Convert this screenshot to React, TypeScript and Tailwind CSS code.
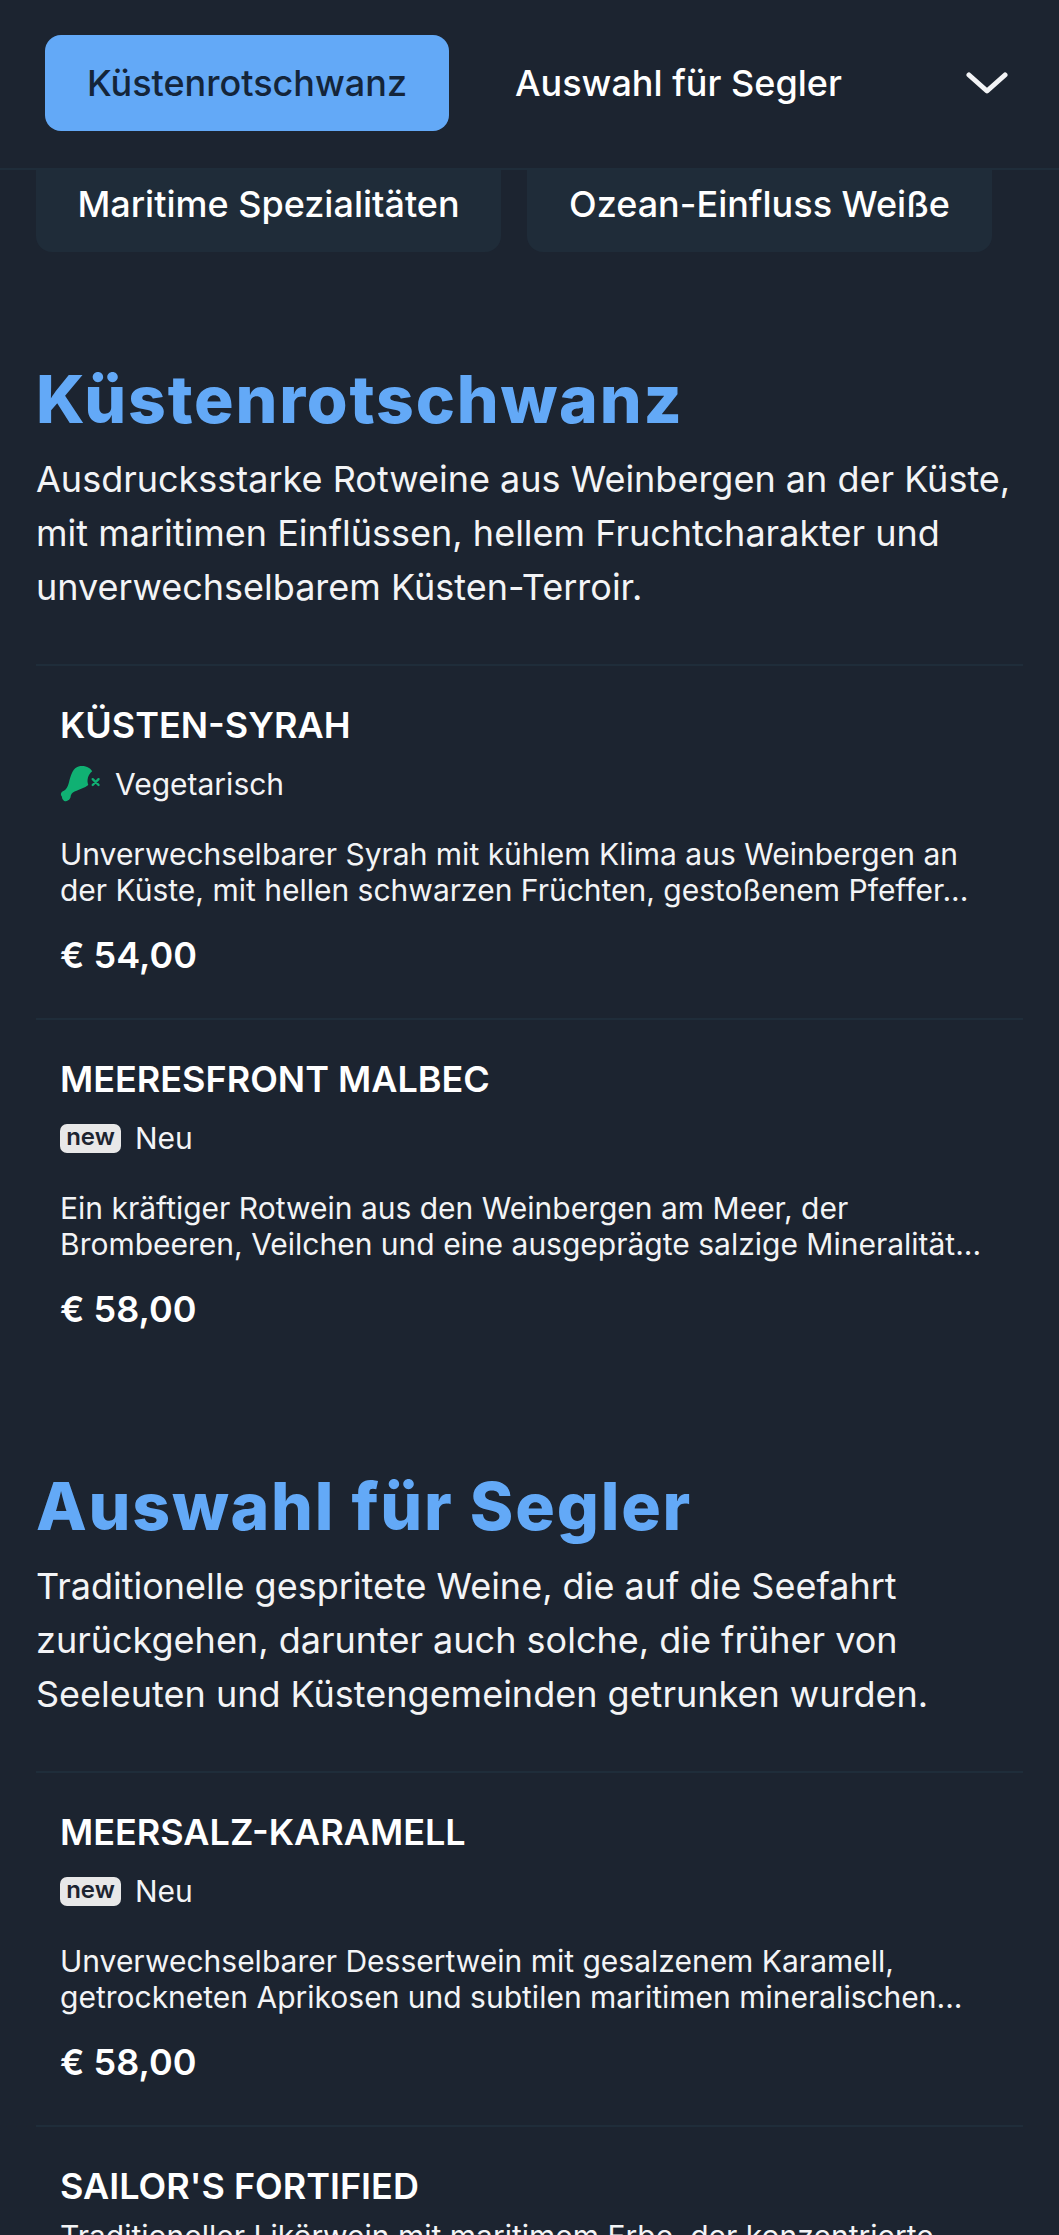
import React from "react";

const INTER = "[font-family:Inter,'Liberation_Sans',sans-serif]";

interface Item {
  name: string;
  tag?: "veg" | "new";
  lines: string[];
  price?: string;
}

function DrumstickIcon() {
  return (
    <svg viewBox="0 0 42 38" className="w-[41px] h-[38px] shrink-0">
      <path
        d="M33 6C30 1 24 0 19 1C14 2 11 9 9 18C8 22 6 25 4 26C1 27 0 30 2 32C2 35 5 38 8 36C10 35 11 33 11 31C12 28 14 27 17 26C21 24 25 23 29 20C27 15 29 9 33 6Z"
        fill="#10b173"
      />
      <path d="M33.500 14l6 6M39.500 14l-6 6" stroke="#10b173" strokeWidth="2.400" strokeLinecap="round" />
    </svg>
  );
}

function NewBadge() {
  return (
    <span className="w-[61px] h-[29px] rounded-[7px] bg-[#e8e8e8] text-[#1c2430] text-[24px] leading-none font-semibold flex items-center justify-center shrink-0 pb-[3px]">
      new
    </span>
  );
}

function MenuItem({ item }: { item: Item }) {
  return (
    <div className="px-[24px] pt-[34px] h-[354px] border-t-2 border-[#1f2d3a]">
      <h3 className="text-[36px] leading-[50px] font-semibold text-white">{item.name}</h3>
      {item.tag && (
        <div className="flex items-center gap-[14px] mt-[9px] h-[50px] text-[30px] text-[#f3f4f6]">
          {item.tag === "veg" ? <DrumstickIcon /> : <NewBadge />}
          <span>{item.tag === "veg" ? "Vegetarisch" : "Neu"}</span>
        </div>
      )}
      <div className={`${item.tag ? "mt-[27px]" : "mt-[7px]"} text-[30px] leading-[36px] text-[#f3f4f6]`}>
        {item.lines.map((l) => (
          <p key={l} className="whitespace-nowrap">
            {l}
          </p>
        ))}
      </div>
      {item.price && <p className="mt-[22px] text-[36px] leading-[50px] font-semibold text-white">{item.price}</p>}
    </div>
  );
}

function Section({ title, intro, items }: { title: string; intro: string[]; items: Item[] }) {
  return (
    <section className="px-[36px]">
      <h2 className="pt-[3px] text-[66px] leading-[80px] font-extrabold tracking-[1.800px] text-[#63a9f7]">{title}</h2>
      <div className="mt-[13px] text-[36px] leading-[54px] text-[#f3f4f6]">
        {intro.map((l) => (
          <p key={l} className="whitespace-nowrap">
            {l}
          </p>
        ))}
      </div>
      <div className="mt-[50px]">
        {items.map((it) => (
          <MenuItem key={it.name} item={it} />
        ))}
      </div>
    </section>
  );
}

export default function App() {
  return (
    <div className={`h-[2235px] overflow-hidden bg-[#1c2430] ${INTER}`}>
      <header className="h-[170px] flex items-center pl-[45px] pr-[51px] border-b-2 border-[#1f2d3a] pb-[2px]">
        <button className="w-[404px] h-[96px] rounded-[16px] bg-[#63a9f7] text-[36px] font-medium text-[#14253a]">
          Küstenrotschwanz
        </button>
        <button className="ml-[66px] text-[36px] font-medium text-white">Auswahl für Segler</button>
        <svg viewBox="0 0 42 22" className="ml-auto w-[42px] h-[22px]" fill="none">
          <path d="M3 3l18 16L39 3" stroke="#f3f4f6" strokeWidth="5" strokeLinecap="round" strokeLinejoin="round" />
        </svg>
      </header>

      {/* tabs, scrolled mostly under the bar */}
      <div className="h-[82px] overflow-hidden flex gap-[26px] pl-[36px]">
        {["Maritime Spezialitäten", "Ozean-Einfluss Weiße"].map((t) => (
          <div
            key={t}
            className="w-[465px] h-[82px] rounded-b-[16px] bg-[#1f2c39] text-[36px] font-medium text-white flex items-center justify-center pb-[15px]"
          >
            {t}
          </div>
        ))}
      </div>

      <div className="pt-[104px] flex flex-col gap-[91px]">
        <Section
          title="Küstenrotschwanz"
          intro={[
            "Ausdrucksstarke Rotweine aus Weinbergen an der Küste,",
            "mit maritimen Einflüssen, hellem Fruchtcharakter und",
            "unverwechselbarem Küsten-Terroir.",
          ]}
          items={[
            {
              name: "KÜSTEN-SYRAH",
              tag: "veg",
              lines: [
                "Unverwechselbarer Syrah mit kühlem Klima aus Weinbergen an",
                "der Küste, mit hellen schwarzen Früchten, gestoßenem Pfeffer...",
              ],
              price: "€ 54,00",
            },
            {
              name: "MEERESFRONT MALBEC",
              tag: "new",
              lines: [
                "Ein kräftiger Rotwein aus den Weinbergen am Meer, der",
                "Brombeeren, Veilchen und eine ausgeprägte salzige Mineralität...",
              ],
              price: "€ 58,00",
            },
          ]}
        />
        <Section
          title="Auswahl für Segler"
          intro={[
            "Traditionelle gespritete Weine, die auf die Seefahrt",
            "zurückgehen, darunter auch solche, die früher von",
            "Seeleuten und Küstengemeinden getrunken wurden.",
          ]}
          items={[
            {
              name: "MEERSALZ-KARAMELL",
              tag: "new",
              lines: [
                "Unverwechselbarer Dessertwein mit gesalzenem Karamell,",
                "getrockneten Aprikosen und subtilen maritimen mineralischen...",
              ],
              price: "€ 58,00",
            },
            {
              name: "SAILOR'S FORTIFIED",
              lines: ["Traditioneller Likörwein mit maritimem Erbe, der konzentrierte"],
            },
          ]}
        />
      </div>
    </div>
  );
}
